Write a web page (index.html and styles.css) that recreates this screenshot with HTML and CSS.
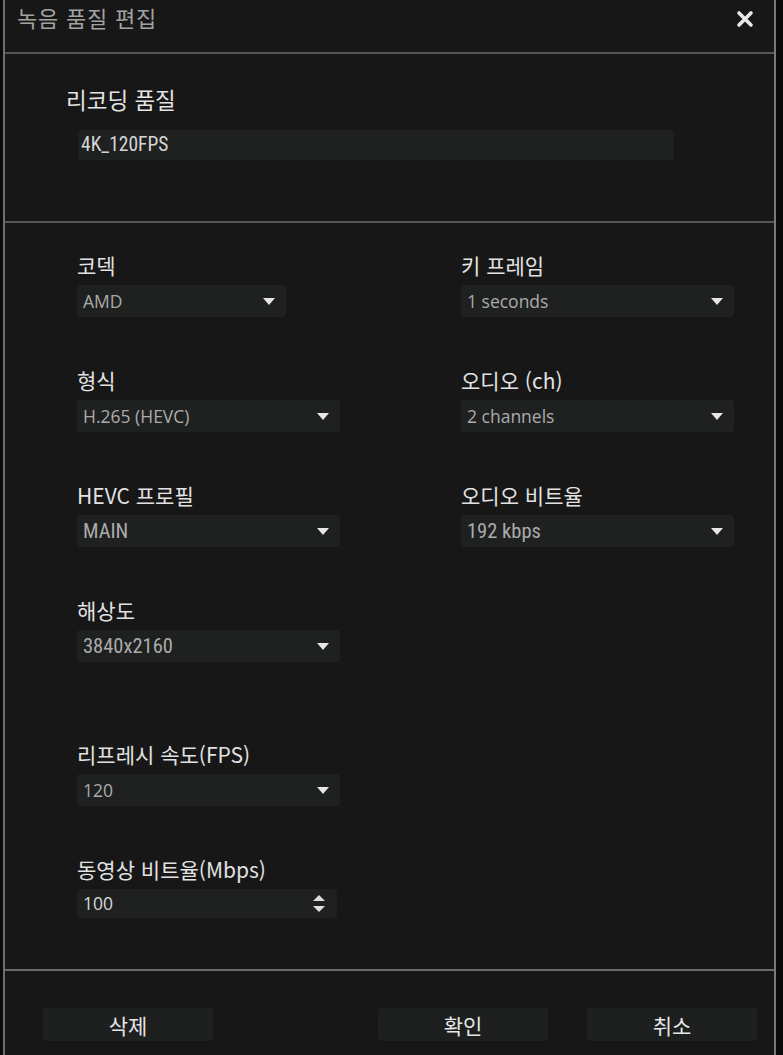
FILE: index.html
```html
<!DOCTYPE html>
<html lang="ko">
<head>
    <meta charset="UTF-8">
    <meta name="viewport" content="width=device-width, initial-scale=1.0">
    <title>녹음 품질 편집</title>
    <link rel="stylesheet" href="styles.css">
</head>
<body>
    <!-- Dialog window -->
    <div class="dialog">
        <!-- Title bar -->
        <div class="title-bar">
            <span class="title">녹음 품질 편집</span>
            <span class="close">
                <svg width="18" height="18" viewBox="0 0 18 18"><path d="M3 3 L15 15 M15 3 L3 15" stroke="#e8e8e8" stroke-width="3.6" stroke-linecap="round"/></svg>
            </span>
        </div>

        <!-- Preset name -->
        <div class="preset">
            <div class="preset-label">리코딩 품질</div>
            <div class="preset-input">4K_120FPS</div>
        </div>

        <!-- Settings in two columns -->
        <div class="settings">
            <div class="column">
                <div class="field">
                    <div class="label">코덱</div>
                    <div class="select short">AMD<span class="arrow"></span></div>
                </div>
                <div class="field">
                    <div class="label">형식</div>
                    <div class="select">H.265 (HEVC)<span class="arrow"></span></div>
                </div>
                <div class="field">
                    <div class="label">HEVC 프로필</div>
                    <div class="select narrow-text">MAIN<span class="arrow"></span></div>
                </div>
                <div class="field">
                    <div class="label">해상도</div>
                    <div class="select narrow-text">3840x2160<span class="arrow"></span></div>
                </div>
                <div class="field spaced">
                    <div class="label">리프레시 속도(FPS)</div>
                    <div class="select">120<span class="arrow"></span></div>
                </div>
                <div class="field">
                    <div class="label">동영상 비트율(Mbps)</div>
                    <div class="select spin">100<span class="spinner"><span class="up"></span><span class="down"></span></span></div>
                </div>
            </div>
            <div class="column right">
                <div class="field">
                    <div class="label">키 프레임</div>
                    <div class="select wide">1 seconds<span class="arrow"></span></div>
                </div>
                <div class="field">
                    <div class="label">오디오 (ch)</div>
                    <div class="select wide">2 channels<span class="arrow"></span></div>
                </div>
                <div class="field">
                    <div class="label">오디오 비트율</div>
                    <div class="select wide narrow-text">192 kbps<span class="arrow"></span></div>
                </div>
            </div>
        </div>

        <!-- Bottom buttons -->
        <div class="footer">
            <button class="btn">삭제</button>
            <div class="footer-right">
                <button class="btn">확인</button>
                <button class="btn">취소</button>
            </div>
        </div>
    </div>
</body>
</html>
```

FILE: styles.css
```css
/* General styling */
body {
    margin: 0;
    background-color: #0b0b0b;
    font-family: "Noto Sans CJK KR", "Noto Sans", sans-serif;
    color: #e2e2e2;
    height: 1055px;
    overflow: hidden;
}

.dialog {
    margin-left: 3px;
    width: 769px;
    height: 1055px;
    background-color: #171717;
    border-left: 2px solid #6e6e6e;
    border-right: 2px solid #7a7a7a;
    display: flex;
    flex-direction: column;
}

/* Title bar */
.title-bar {
    height: 54px;
    flex: none;
    display: flex;
    justify-content: space-between;
    align-items: flex-start;
    padding: 3px 20px 0 12px;
    box-sizing: border-box;
    border-bottom: 2px solid #555;
}

.title {
    font-size: 22px;
    color: #a2a2a2;
    line-height: 28px;
    letter-spacing: 0.8px;
}

.close {
    margin-top: 6px;
}

/* Preset name */
.preset {
    height: 169px;
    flex: none;
    border-bottom: 2px solid #555;
    box-sizing: border-box;
    padding: 31px 0 0 61px;
}

.preset-label {
    font-size: 22.5px;
    line-height: 28px;
    color: #e4e4e4;
}

.preset-input {
    margin: 17px 0 0 12px;
    width: 596px;
    height: 30px;
    background-color: #1f2121;
    border-radius: 3px;
    font-family: "Liberation Sans Narrow", "Roboto Condensed", "Noto Sans CJK KR", sans-serif;
    font-size: 19.5px;
    line-height: 30px;
    padding-left: 3px;
    box-sizing: border-box;
    color: #d6d6d6;
}

/* Settings grid */
.settings {
    flex: 1;
    display: flex;
    padding: 29px 0 0 72px;
    border-bottom: 2px solid #6a6a6a;
}

.column {
    flex: none;
    width: 384px;
    display: flex;
    flex-direction: column;
    gap: 50px;
}

.column.right {
    width: 280px;
}

.field {
    display: flex;
    flex-direction: column;
    gap: 7px;
}

.field.spaced {
    margin-top: 29px;
}

.label {
    font-size: 21px;
    line-height: 26px;
    color: #e2e2e2;
    white-space: nowrap;
}

.select {
    position: relative;
    width: 263px;
    height: 32px;
    background-color: #1f2121;
    border-radius: 4px;
    font-family: "Open Sans", "Noto Sans", sans-serif;
    font-size: 17.5px;
    line-height: 32px;
    padding-left: 6px;
    box-sizing: border-box;
    color: #ababab;
}

.select.short {
    width: 209px;
}

.select.wide {
    width: 273px;
}

.select.spin {
    width: 260px;
    height: 29px;
    line-height: 29px;
    color: #d8d8d8;
}

.narrow-text {
    font-family: "Liberation Sans Narrow", "Roboto Condensed", "Open Sans", sans-serif;
    font-size: 20.5px;
}

.arrow {
    position: absolute;
    right: 11px;
    top: 13px;
    width: 0;
    height: 0;
    border-left: 6.5px solid transparent;
    border-right: 6.5px solid transparent;
    border-top: 7px solid #e6e6e6;
}

.spinner .up,
.spinner .down {
    position: absolute;
    right: 12px;
    width: 0;
    height: 0;
    border-left: 6px solid transparent;
    border-right: 6px solid transparent;
}

.spinner .up {
    top: 6px;
    border-bottom: 6px solid #dcdcdc;
}

.spinner .down {
    top: 17px;
    border-top: 6px solid #dcdcdc;
}

/* Footer buttons */
.footer {
    height: 84px;
    flex: none;
    display: flex;
    justify-content: space-between;
    align-items: flex-start;
    padding: 37px 17px 0 38px;
    box-sizing: border-box;
}

.footer-right {
    display: flex;
    gap: 39px;
}

.btn {
    width: 170px;
    height: 33px;
    background-color: #1e2020;
    border: none;
    border-radius: 4px;
    font-family: "Noto Sans CJK KR", sans-serif;
    font-size: 21px;
    color: #e6e6e6;
    padding: 0;
}
```
